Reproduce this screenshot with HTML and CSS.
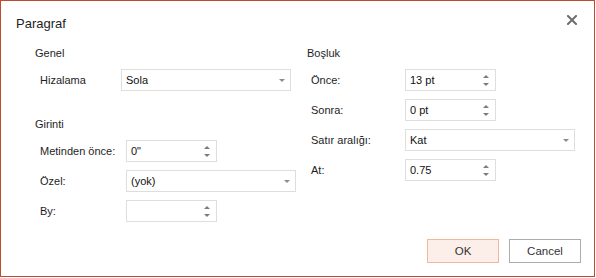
FILE: index.html
```html
<!DOCTYPE html>
<html lang="tr">
<head>
    <meta charset="UTF-8">
    <meta name="viewport" content="width=device-width, initial-scale=1.0">
    <title>Paragraf</title>
    <link rel="stylesheet" href="styles.css">
</head>
<body>

    <div class="dialog">
        <!-- Title bar -->
        <div class="dialog-header">
            <h1 class="dialog-title">Paragraf</h1>
            <button class="close-btn" aria-label="Kapat">
                <svg width="10" height="10" viewBox="0 0 10 10">
                    <path d="M1 1 L9 9 M9 1 L1 9" stroke="#6e6e6e" stroke-width="2" stroke-linecap="square" fill="none"/>
                </svg>
            </button>
        </div>

        <div class="dialog-body">
            <!-- Genel + Girinti -->
            <div class="column column-left">
                <div class="section-title">Genel</div>
                <div class="field field-align">
                    <label>Hizalama</label>
                    <div class="select"><span>Sola</span><span class="caret"></span></div>
                </div>

                <div class="section-title section-next">Girinti</div>
                <div class="field">
                    <label>Metinden önce:</label>
                    <div class="spin"><span>0"</span><span class="arrows"><i class="up"></i><i class="down"></i></span></div>
                </div>
                <div class="field">
                    <label>Özel:</label>
                    <div class="select"><span>(yok)</span><span class="caret"></span></div>
                </div>
                <div class="field">
                    <label>By:</label>
                    <div class="spin"><span></span><span class="arrows"><i class="up"></i><i class="down"></i></span></div>
                </div>
            </div>

            <!-- Boşluk -->
            <div class="column column-right">
                <div class="section-title">Boşluk</div>
                <div class="field">
                    <label>Önce:</label>
                    <div class="spin"><span>13 pt</span><span class="arrows"><i class="up"></i><i class="down"></i></span></div>
                </div>
                <div class="field">
                    <label>Sonra:</label>
                    <div class="spin"><span>0 pt</span><span class="arrows"><i class="up"></i><i class="down"></i></span></div>
                </div>
                <div class="field">
                    <label>Satır aralığı:</label>
                    <div class="select"><span>Kat</span><span class="caret"></span></div>
                </div>
                <div class="field">
                    <label>At:</label>
                    <div class="spin"><span>0.75</span><span class="arrows"><i class="up"></i><i class="down"></i></span></div>
                </div>
            </div>
        </div>

        <!-- Buttons -->
        <div class="dialog-footer">
            <button class="btn btn-ok">OK</button>
            <button class="btn">Cancel</button>
        </div>
    </div>

</body>
</html>
```

FILE: styles.css
```css
body {
    margin: 0;
    font-family: "Liberation Sans", Arial, sans-serif;
    font-size: 11px;
    color: #1e1e1e;
    background: #fff;
}

/* Dialog frame */
.dialog {
    width: 595px;
    height: 277px;
    box-sizing: border-box;
    border: 1px solid #c04a2c;
    display: flex;
    flex-direction: column;
}

.dialog-header {
    height: 44px;
    display: flex;
    justify-content: space-between;
    align-items: flex-start;
    padding: 0 17px 0 15px;
}

.dialog-title {
    margin: 13px 0 0;
    font-size: 13px;
    font-weight: normal;
    line-height: 20px;
    color: #1e1e1e;
}

.close-btn {
    margin-top: 14px;
    width: 10px;
    height: 10px;
    padding: 0;
    border: none;
    background: none;
    display: flex;
}

/* Body columns */
.dialog-body {
    display: flex;
    padding-left: 34px;
}

.column-left {
    width: 272px;
}

.section-title {
    line-height: 16px;
    margin-bottom: 8px;
}

.section-next {
    margin-top: 25px;
}

.field {
    display: flex;
    align-items: center;
    height: 22px;
    margin-bottom: 8px;
}

.field label {
    margin-left: 5px;
    width: 86px;
    flex-shrink: 0;
}

.field-align label {
    width: 81px;
}

.column-right .field label {
    margin-left: 4px;
    width: 94px;
}

/* Inputs */
.select,
.spin {
    height: 22px;
    box-sizing: border-box;
    border: 1px solid #dedede;
    display: flex;
    align-items: center;
    justify-content: space-between;
    padding-left: 4px;
    color: #111;
}

.select {
    width: 170px;
    padding-right: 5px;
}

.spin {
    width: 91px;
    padding-right: 6px;
}

.caret {
    width: 0;
    height: 0;
    border-left: 3px solid transparent;
    border-right: 3px solid transparent;
    border-top: 3px solid #8c8c8c;
}

.arrows {
    display: flex;
    flex-direction: column;
    gap: 5px;
}

.arrows i {
    width: 0;
    height: 0;
    border-left: 3px solid transparent;
    border-right: 3px solid transparent;
}

.arrows .up {
    border-bottom: 3px solid #7c7c7c;
}

.arrows .down {
    border-top: 3px solid #7c7c7c;
}

/* Footer buttons */
.dialog-footer {
    margin-top: auto;
    display: flex;
    justify-content: flex-end;
    gap: 10px;
    padding: 0 13px 13px 0;
}

.btn {
    width: 72px;
    height: 24px;
    font-family: "Liberation Sans", Arial, sans-serif;
    font-size: 11.5px;
    color: #333;
    background: #fff;
    border: 1px solid #acacac;
    padding: 0;
}

.btn-ok {
    background: #fcefea;
    border-color: #f2b79d;
}
```
